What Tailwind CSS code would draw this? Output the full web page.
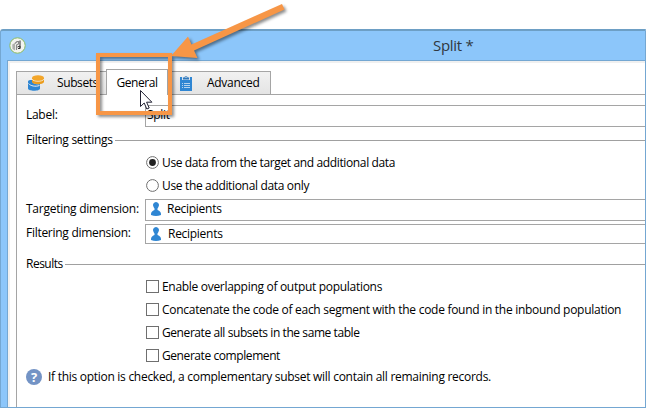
<!DOCTYPE html>
<html lang="en">
<head>
<meta charset="utf-8">
<title>Split</title>
<script src="https://cdn.jsdelivr.net/npm/@tailwindcss/browser@4"></script>
</head>
<body class="bg-white">
<div class="relative w-[653px] h-[416px] overflow-hidden pt-[29px] text-[12px] leading-[16px] tracking-[-0.28px] text-black font-['Open_Sans','Noto_Sans',sans-serif] whitespace-nowrap">
  <main class="w-[646px] h-[379px] flex flex-col bg-[#8cc6fa] border border-t-2 border-[#74a7d2] border-t-[#6d9fc5] rounded-tl-[3px]">
    <header class="h-[29px] shrink-0 flex items-center">
      <svg class="ml-[8px] -mt-px w-[17px] h-[17px] shrink-0" viewBox="0 0 17 17">
        <circle cx="8.5" cy="8.5" r="7.7" fill="#f3f4f0" stroke="#8bbb62" stroke-width="1"/>
        <path d="M3.200 7.500 6 6v7.500L3.500 12z" fill="#aeb1ac"/>
        <path d="M6 6.500 8 4.500h1.500V7L7.500 8v5" fill="none" stroke="#8a8a8a" stroke-width="1.200"/>
        <path d="M11 3.500v8M8.500 10l2.500-1v2.500H9" fill="none" stroke="#333" stroke-width="1"/>
      </svg>
      <h1 class="ml-[407px] -mt-px text-[15px] leading-[20px] tracking-[-0.3px] text-[#303840]">Split *</h1>
    </header>
    <div class="ml-[6px] grow bg-white border-t border-l border-[#74a7d2]">
      <div class="h-full border-t-2 border-l-2 border-[#f0f0f0] pt-[6px] pl-[6px] flex flex-col">
        <nav class="flex items-end h-[26px] shrink-0 relative z-10 -mb-px">
          <div class="w-[91px] h-[24px] flex items-center border border-[#a5a5a5] bg-linear-to-b from-[#f1f1f1] to-[#e4e4e4]">
            <svg class="ml-[10px] w-[18px] h-[18px] shrink-0" viewBox="0 0 18 18">
              <path d="M1 7.500C1 6 4 5.800 5 6c0 4 5 5 8 4v4.500c0 3-12 3-12 0z" fill="#2f86d3"/>
              <path d="M1.500 9.500c2 2.500 7 3.500 11 2" fill="none" stroke="#eee" stroke-width="1"/>
              <path d="M5 4v4c1 3 11 3 12 0V4z" fill="#eb9c1c"/>
              <ellipse cx="11" cy="3.900" rx="6" ry="2.600" fill="#f3a62b"/>
              <path d="M5 5c1 3 11 3 12 0" fill="none" stroke="#f7e4c3" stroke-width="1"/>
            </svg>
            <span class="ml-[12px] tracking-[-0.400px]">Subsets</span>
          </div>
          <div class="-ml-px w-[62px] h-[26px] flex items-center justify-center bg-white border border-b-0 border-[#a5a5a5]"><span class="tracking-[-0.450px]">General</span></div>
          <div class="-ml-px w-[104px] h-[24px] flex items-center border border-[#a5a5a5] bg-linear-to-b from-[#f1f1f1] to-[#e4e4e4]">
            <svg class="ml-[12px] w-[12px] h-[16px] shrink-0" viewBox="0 0 12 16">
              <path d="M0 2h2v3h8V2h2v14H0z" fill="#2f86d3"/>
              <path d="M2 2h8v3H2z" fill="#d5e2ee"/>
              <path d="M3 4.500V2.500h1.500a1.500 1.500 0 0 1 3 0H9v2z" fill="#2f78bb"/><circle cx="6" cy="2.300" r=".7" fill="#eee"/>
              <path d="M2 8.500h1M4 8.500h6M2 10.500h1M4 10.500h6M2 12.500h1M4 12.500h6" stroke="#b5d3ee"/>
            </svg>
            <span class="ml-[15px]">Advanced</span>
          </div>
        </nav>
        <section class="grow border-t border-l border-[#a5a5a5] pt-[10px] pl-[9px] flex flex-col">
          <div class="h-[22px] shrink-0 flex items-center">
            <label class="w-[119px] -mt-[2px]">Label:</label>
            <div class="grow h-full border border-r-0 border-[#a5a5a5] pl-[1px] flex items-center"><span class="-mt-[2px]">Split</span></div>
          </div>
          <div class="mt-[3px] h-[20px] shrink-0 flex items-center"><span class="w-[89px]">Filtering settings</span><hr class="grow border-[#a0a0a0] mt-[1px]"></div>
          <div class="mt-px pl-[120px] shrink-0">
            <div class="h-[23px] flex items-center gap-[3px]">
              <svg class="w-[13px] h-[13px] shrink-0" viewBox="0 0 13 13"><circle cx="6.500" cy="6.500" r="5.900" fill="#fff" stroke="#6f6f6f"/><circle cx="6.500" cy="6.500" r="3.400" fill="#202020"/></svg>
              <span class="tracking-[-0.370px]">Use data from the target and additional data</span>
            </div>
            <div class="h-[23px] flex items-center gap-[3px]">
              <svg class="w-[13px] h-[13px] shrink-0" viewBox="0 0 13 13"><circle cx="6.500" cy="6.500" r="5.900" fill="#fff" stroke="#6f6f6f"/></svg>
              <span class="tracking-[-0.340px]">Use the additional data only</span>
            </div>
          </div>
          <div class="mt-[2px] h-[22px] shrink-0 flex items-center">
            <label class="w-[119px] -mt-[2px] tracking-[-0.250px]">Targeting dimension:</label>
            <div class="grow h-full border border-r-0 border-[#a5a5a5] pl-[5px] flex items-center">
              <svg class="w-[10px] h-[14px] -mt-[2px]" viewBox="0 0 10 14"><path d="M5 0a3 3 0 0 1 2.600 4.400Q7 6 6.500 6.500V8Q10 9.500 10 12v1Q5 15 0 13v-1Q0 9.500 3.500 8V6.500Q3 6 2.400 4.400A3 3 0 0 1 5 0" fill="#2f86d3"/></svg>
              <span class="ml-[6px] -mt-[2px]">Recipients</span>
            </div>
          </div>
          <div class="mt-[3px] h-[20px] shrink-0 flex items-center">
            <label class="w-[119px] -mt-[2px]">Filtering dimension:</label>
            <div class="grow h-full border border-r-0 border-[#a5a5a5] pl-[5px] flex items-center">
              <svg class="w-[10px] h-[14px]" viewBox="0 0 10 14"><path d="M5 0a3 3 0 0 1 2.600 4.400Q7 6 6.500 6.500V8Q10 9.500 10 12v1Q5 15 0 13v-1Q0 9.500 3.500 8V6.500Q3 6 2.400 4.400A3 3 0 0 1 5 0" fill="#2f86d3"/></svg>
              <span class="ml-[7px]">Recipients</span>
            </div>
          </div>
          <div class="mt-[10px] h-[20px] shrink-0 flex items-center"><span class="w-[39px] tracking-[-0.500px]">Results</span><hr class="grow border-[#a0a0a0] mt-[1px]"></div>
          <div class="mt-px pl-[120px] shrink-0">
            <div class="h-[23px] flex items-center gap-[3px]"><i class="size-[13px] shrink-0 border border-[#6f6f6f]"></i><span class="tracking-[-0.300px]">Enable overlapping of output populations</span></div>
            <div class="h-[23px] flex items-center gap-[3px]"><i class="size-[13px] shrink-0 border border-[#6f6f6f]"></i><span>Concatenate the code of each segment with the code found in the inbound population</span></div>
            <div class="h-[23px] flex items-center gap-[3px]"><i class="size-[13px] shrink-0 border border-[#6f6f6f]"></i><span class="tracking-[-0.420px]">Generate all subsets in the same table</span></div>
            <div class="h-[23px] flex items-center gap-[3px]"><i class="size-[13px] shrink-0 border border-[#6f6f6f]"></i><span class="tracking-[-0.420px]">Generate complement</span></div>
          </div>
          <div class="h-[20px] shrink-0 flex items-center">
            <div class="size-[16px] rounded-full bg-[#7393c5] text-white font-bold text-[13px] tracking-normal flex items-center justify-center">?</div>
            <span class="ml-[6px]">If this option is checked, a complementary subset will contain all remaining records.</span>
          </div>
        </section>
      </div>
    </div>
  </main>
  <svg class="absolute inset-0 z-20 w-[653px] h-[416px]" viewBox="0 0 653 416">
    <path d="M140.500 90.500v16l3.700-3.500 2.600 6 2.400-1-2.600-5.800h5.300z" fill="#fff" stroke="#222233" stroke-width="1"/>
    <g class="drop-shadow-[2px_2px_1.500px_rgba(0,0,0,0.450)]">
      <rect x="98" y="55" width="72" height="58" fill="none" stroke="#f79646" stroke-width="4"/>
      <path d="M282 4 284.500 9.500 194 50.500 197.500 58 171 56 188 36.500 191.500 44.500z" fill="#f79646"/>
    </g>
  </svg>
</div>
</body>
</html>
